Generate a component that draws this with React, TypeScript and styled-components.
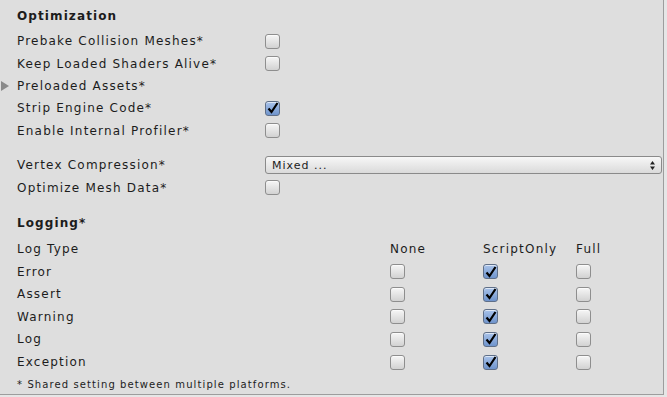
import React from 'react';
import styled, { createGlobalStyle } from 'styled-components';

const GlobalStyle = createGlobalStyle`
  html, body {
    margin: 0;
    padding: 0;
    background: #e6e6e6;
  }
  body {
    font-family: "DejaVu Sans", "Liberation Sans", sans-serif;
    font-size: 12px;
    letter-spacing: 1.2px;
    color: #1c1c1c;
  }
`;

const Panel = styled.div`
  width: 664px;
  height: 395px;
  background: #dedede;
  border-right: 1px solid #9d9d9d;
  border-bottom: 1px solid #9d9d9d;
  padding: 6px 0 0 17px;
  box-sizing: border-box;
  display: flex;
  flex-direction: column;
  overflow: hidden;

  & > * {
    flex: none;
  }
`;

const Heading = styled.div<{ $top?: number }>`
  font-weight: bold;
  letter-spacing: 1.1px;
  height: 20px;
  line-height: 20px;
  margin-top: ${(p) => p.$top ?? 0}px;
  margin-bottom: 3px;
`;

const Row = styled.div<{ $top?: number }>`
  display: flex;
  align-items: center;
  height: 22.4px;
  margin-top: ${(p) => p.$top ?? 0}px;
  position: relative;
`;

const Label = styled.div`
  width: 248px;
  flex: none;
  white-space: nowrap;
`;

const Foldout = styled.span`
  position: absolute;
  left: -16px;
  top: 50%;
  margin-top: -5px;
  width: 0;
  height: 0;
  border-top: 5px solid transparent;
  border-bottom: 5px solid transparent;
  border-left: 8px solid #8a8a8a;
`;

const Box = styled.span<{ $checked?: boolean }>`
  display: inline-flex;
  align-items: center;
  justify-content: center;
  width: 13px;
  height: 13px;
  border: 1px solid ${(p) => (p.$checked ? '#5f6f88' : '#8e8e8e')};
  border-radius: 3px;
  box-sizing: content-box;
  background: ${(p) =>
    p.$checked
      ? 'linear-gradient(#a9c3ea, #6f94cc)'
      : 'linear-gradient(#f6f6f6, #d2d2d2)'};
  box-shadow: inset 0 1px 0 rgba(255, 255, 255, 0.6);
`;

const Check = ({ checked }: { checked?: boolean }) => (
  <Box $checked={checked}>
    {checked && (
      <svg width="12" height="12" viewBox="0 0 12 12">
        <path d="M1.5 6.5 L4.5 10 L10.5 1" fill="none" stroke="#000" strokeWidth="2.2" />
      </svg>
    )}
  </Box>
);

const Select = styled.div`
  width: 397px;
  height: 18px;
  border: 1px solid #8a8a8a;
  border-radius: 3px;
  background: linear-gradient(#f7f7f7, #dadada);
  display: flex;
  align-items: center;
  justify-content: space-between;
  padding: 0 6px;
  box-sizing: border-box;
  font-size: 11px;
  letter-spacing: 1px;
`;

const Arrows = () => (
  <svg width="5" height="9" viewBox="0 0 5 9">
    <path d="M2.5 0 L5 3.5 L0 3.5 Z M2.5 9 L5 5.5 L0 5.5 Z" fill="#222" />
  </svg>
);

const LogGrid = styled.div`
  display: grid;
  grid-template-columns: 373px 93px 93px 80px;
  grid-auto-rows: 22.6px;
  align-items: center;
  margin-top: 2px;
`;

const Footer = styled.div`
  font-size: 10px;
  letter-spacing: 1.1px;
  height: 21px;
  line-height: 21px;
  margin-top: 1px;
`;

const levels = ['Error', 'Assert', 'Warning', 'Log', 'Exception'];

export default function App() {
  return (
    <>
      <GlobalStyle />
      <Panel>
        <Heading>Optimization</Heading>
        <Row $top={1}>
          <Label>Prebake Collision Meshes*</Label>
          <Check />
        </Row>
        <Row>
          <Label>Keep Loaded Shaders Alive*</Label>
          <Check />
        </Row>
        <Row>
          <Foldout />
          <Label>Preloaded Assets*</Label>
        </Row>
        <Row>
          <Label>Strip Engine Code*</Label>
          <Check checked />
        </Row>
        <Row>
          <Label>Enable Internal Profiler*</Label>
          <Check />
        </Row>
        <Row $top={12}>
          <Label>Vertex Compression*</Label>
          <Select>
            <span>Mixed ...</span>
            <Arrows />
          </Select>
        </Row>
        <Row>
          <Label>Optimize Mesh Data*</Label>
          <Check />
        </Row>
        <Heading $top={14}>Logging*</Heading>
        <LogGrid>
          <span>Log Type</span>
          <span>None</span>
          <span>ScriptOnly</span>
          <span>Full</span>
          {levels.map((l) => (
            <React.Fragment key={l}>
              <span>{l}</span>
              <Check />
              <Check checked />
              <Check />
            </React.Fragment>
          ))}
        </LogGrid>
        <Footer>* Shared setting between multiple platforms.</Footer>
      </Panel>
    </>
  );
}
